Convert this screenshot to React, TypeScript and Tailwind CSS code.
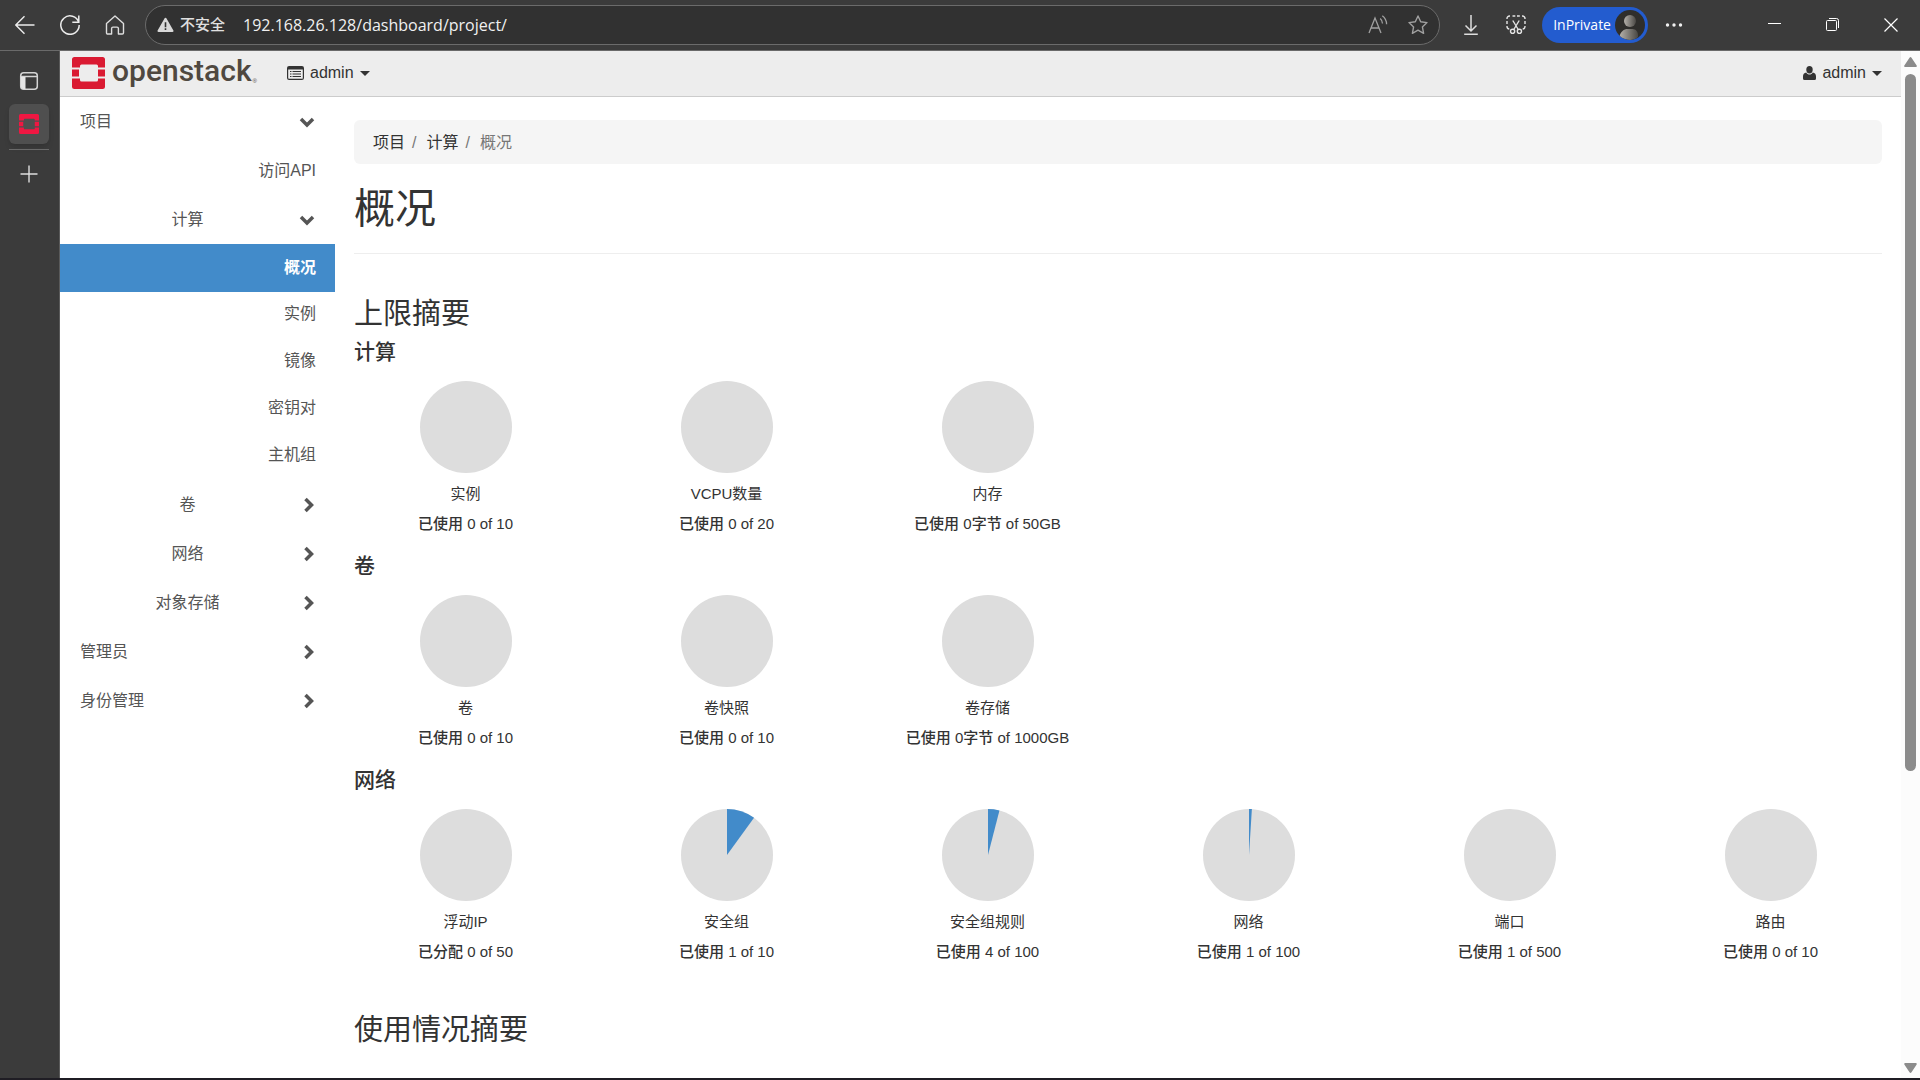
import type { ReactNode } from "react";
import clsx from "clsx";

type NavItem = {
  label: string;
  kind: "panel" | "group" | "link";
  open?: boolean;
  active?: boolean;
};

const navItems: NavItem[] = [
  { label: "项目", kind: "panel", open: true },
  { label: "访问API", kind: "link" },
  { label: "计算", kind: "group", open: true },
  { label: "概况", kind: "link", active: true },
  { label: "实例", kind: "link" },
  { label: "镜像", kind: "link" },
  { label: "密钥对", kind: "link" },
  { label: "主机组", kind: "link" },
  { label: "卷", kind: "group" },
  { label: "网络", kind: "group" },
  { label: "对象存储", kind: "group" },
  { label: "管理员", kind: "panel" },
  { label: "身份管理", kind: "panel" },
];

type Quota = {
  name: string;
  verb?: string;
  used: number;
  unit?: string;
  max: number;
  maxUnit?: string;
  share?: number;
};

const quotaSections: { title: string; quotas: Quota[] }[] = [
  {
    title: "计算",
    quotas: [
      { name: "实例", used: 0, max: 10 },
      { name: "VCPU数量", used: 0, max: 20 },
      { name: "内存", used: 0, unit: "字节", max: 50, maxUnit: "GB" },
    ],
  },
  {
    title: "卷",
    quotas: [
      { name: "卷", used: 0, max: 10 },
      { name: "卷快照", used: 0, max: 10 },
      { name: "卷存储", used: 0, unit: "字节", max: 1000, maxUnit: "GB" },
    ],
  },
  {
    title: "网络",
    quotas: [
      { name: "浮动IP", verb: "已分配", used: 0, max: 50 },
      { name: "安全组", used: 1, max: 10, share: 0.1 },
      { name: "安全组规则", used: 4, max: 100, share: 0.04 },
      { name: "网络", used: 1, max: 100, share: 0.01 },
      { name: "端口", used: 1, max: 500 },
      { name: "路由", used: 0, max: 10 },
    ],
  },
];

function IconButton({ label, className, children }: { label: string; className?: string; children: ReactNode }) {
  return (
    <button type="button" aria-label={label} className={clsx("flex shrink-0 items-center justify-center", className)}>
      {children}
    </button>
  );
}

function OpenStackMark({ className, fill }: { className?: string; fill: string }) {
  return (
    <svg viewBox="0 0 33 32" className={className} fill={fill} preserveAspectRatio="none">
      <path d="M2.5 0h28A2.5 2.5 0 0 1 33 2.5V10.500h-7V9a1.500 1.500 0 0 0-1.500-1.500h-15A1.500 1.500 0 0 0 8 9v1.500H0V2.500A2.500 2.500 0 0 1 2.500 0z" />
      <path d="M0 12.500h7v7H0zM26 12.500h7v7h-7z" />
      <path d="M2.500 32h28a2.500 2.500 0 0 0 2.500-2.500V21.500h-7V23a1.500 1.500 0 0 1-1.500 1.500h-15A1.500 1.500 0 0 1 8 23v-1.500H0v8A2.500 2.500 0 0 0 2.500 32z" />
    </svg>
  );
}

function Caret() {
  return (
    <svg width="10" height="5" viewBox="0 0 10 5" fill="#333">
      <path d="M0 0h10L5 5z" />
    </svg>
  );
}

function Chevron({ open }: { open?: boolean }) {
  return open ? (
    <svg width="16" height="12" viewBox="0 0 16 12" fill="none" stroke="#555" strokeWidth="3.500">
      <path d="M2 3l6 6 6-6" />
    </svg>
  ) : (
    <svg width="12" height="16" viewBox="0 0 12 16" fill="none" stroke="#555" strokeWidth="3.500">
      <path d="M2.500 2l6 6-6 6" />
    </svg>
  );
}

function BrowserBar() {
  return (
    <header className="flex h-[51px] shrink-0 items-center border-b border-[#6a6a6a] bg-[#3b3b3b] pr-[22px] pl-[15px]">
      <div className="flex items-center gap-[25px]">
        <IconButton label="后退">
          <svg width="20" height="20" viewBox="0 0 20 20" fill="none" stroke="#ececec" strokeWidth="1.400">
            <path d="M19.500 10H1M9.500 1.200L.8 10l8.700 8.800" />
          </svg>
        </IconButton>
        <IconButton label="刷新">
          <svg width="20" height="20" viewBox="0 0 20 20" fill="none" stroke="#ececec" strokeWidth="1.500">
            <path d="M18.800 7.400A9.200 9.200 0 1 0 19.200 10M18.800.5v6.700h-6.500" />
          </svg>
        </IconButton>
        <IconButton label="主页">
          <svg width="20" height="20" viewBox="0 0 20 20" fill="none" stroke="#dedede" strokeWidth="1.400" strokeLinejoin="round">
            <path d="M1.500 8.400L10 .9l8.500 7.500v9.400a1.200 1.200 0 0 1-1.200 1.200h-3.900v-5.500a1.400 1.400 0 0 0-1.400-1.400H8a1.400 1.400 0 0 0-1.400 1.400V19H2.700a1.200 1.200 0 0 1-1.200-1.200z" />
          </svg>
        </IconButton>
      </div>

      <div className="ml-5 flex h-10 min-w-0 flex-1 items-center rounded-full border border-[#6b6b6b] bg-[#313131] pr-[11px] pl-[11px]">
        <button type="button" className="flex shrink-0 items-center gap-1.5 text-[15px] leading-5 font-medium text-[#e0e0e0]">
          <svg width="17" height="16" viewBox="0 0 17 16">
            <path d="M8.500.8a1 1 0 0 1 .9.5l7 12.300a1 1 0 0 1-.9 1.500h-14a1 1 0 0 1-.9-1.500l7-12.300a1 1 0 0 1 .9-.5z" fill="#d8d8d8" />
            <path d="M7.700 5.200h1.600v5H7.700zM7.700 11.300h1.600v1.700H7.700z" fill="#313131" />
          </svg>
          不安全
        </button>
        <input
          aria-label="地址"
          defaultValue="192.168.26.128/dashboard/project/"
          className="ml-[18px] min-w-0 flex-1 bg-transparent font-['Open_Sans','Noto_Sans_CJK_SC',sans-serif] text-base text-[#f0f0f0] outline-none"
        />
        <div className="flex items-center gap-5">
          <IconButton label="大声朗读">
            <svg width="20" height="20" viewBox="0 0 20 20" fill="none" stroke="#a0a0a0" strokeWidth="1.300">
              <path d="M1 18L7 3l6 15M3 13h8M12.200 3.500a7 7 0 0 1 2.300 5M14.300.8a11 11 0 0 1 4.300 8.400" />
            </svg>
          </IconButton>
          <IconButton label="收藏">
            <svg width="20" height="20" viewBox="0 0 20 20" fill="none" stroke="#a0a0a0" strokeWidth="1.400" strokeLinejoin="round">
              <path d="M10 1l2.700 5.800 6.300.8-4.600 4.300 1.200 6.400L10 15.200l-5.600 3.100 1.200-6.400L1 7.600l6.300-.8z" />
            </svg>
          </IconButton>
        </div>
      </div>

      <IconButton label="下载" className="ml-[21px]">
        <svg width="20" height="20" viewBox="0 0 20 20" fill="none" stroke="#dedede" strokeWidth="1.500">
          <path d="M10 0v16M4.500 10.500L10 16l5.500-5.500M3.200 19.200h13.600" />
        </svg>
      </IconButton>
      <IconButton label="截图" className="ml-[25px]">
        <svg width="20" height="20" viewBox="0 0 20 20" fill="none" stroke="#e4e4e4" strokeWidth="1.400">
          <path d="M1 4V3.500A2.500 2.500 0 0 1 3.500 1H4M6.500 1h2.800M11 1h2.800M16 1h.5A2.500 2.500 0 0 1 19 3.500V4M1 6v3M19 6v3M1 11v.5A2.500 2.500 0 0 0 3.300 14M19 11v.5a2.500 2.500 0 0 1-2.300 2.500" />
          <path d="M6.800 5.500l5.400 9M13.200 5.500l-5.400 9" />
          <circle cx="6.600" cy="16.300" r="2.100" />
          <circle cx="13.400" cy="16.300" r="2.100" />
        </svg>
      </IconButton>
      <button
        type="button"
        className="ml-4 flex h-9 shrink-0 items-center gap-1 rounded-full bg-[#235ccf] pr-[3px] pl-[11px] font-['Open_Sans',sans-serif] text-sm text-white"
      >
        InPrivate
        <svg width="30" height="30" viewBox="0 0 30 30">
          <defs>
            <linearGradient id="avatar" x1="0" x2="1">
              <stop offset="0" stopColor="#b5b1aa" />
              <stop offset="1" stopColor="#4a4844" />
            </linearGradient>
            <clipPath id="avatarClip">
              <circle cx="15" cy="15" r="15" />
            </clipPath>
          </defs>
          <circle cx="15" cy="15" r="15" fill="#2f2e2b" />
          <g clipPath="url(#avatarClip)" fill="url(#avatar)">
            <circle cx="15" cy="11" r="6" />
            <path d="M4.500 26.500c1-5 4.500-7.500 8-7.500h5c3.500 0 5.500 3 5.500 6v2c-2 2-5 3.200-8 3.200s-8-1-10.500-3.700z" />
          </g>
        </svg>
      </button>
      <IconButton label="设置及其他" className="ml-4">
        <svg width="20" height="20" viewBox="0 0 20 20" fill="#f0f0f0">
          <circle cx="3.500" cy="10" r="1.700" />
          <circle cx="10" cy="10" r="1.700" />
          <circle cx="16.500" cy="10" r="1.700" />
        </svg>
      </IconButton>
      <div className="ml-[84px] flex items-center gap-11">
        <IconButton label="最小化">
          <svg width="14" height="14" viewBox="0 0 14 14" stroke="#fff">
            <path d="M0 5.500h13" />
          </svg>
        </IconButton>
        <IconButton label="还原">
          <svg width="14" height="14" viewBox="0 0 14 14" fill="none" stroke="#fff">
            <rect x=".5" y="2.500" width="10" height="10" rx="1" />
            <path d="M3 .5h7.500a2 2 0 0 1 2 2V10" />
          </svg>
        </IconButton>
        <IconButton label="关闭">
          <svg width="14" height="14" viewBox="0 0 14 14" stroke="#fff" strokeWidth="1.200">
            <path d="M.5.5l13 13M13.500.5l-13 13" />
          </svg>
        </IconButton>
      </div>
    </header>
  );
}

function TabStrip() {
  return (
    <aside className="flex w-[60px] shrink-0 flex-col items-center border-r border-[#5a5a5a] bg-[#3b3b3b] pr-px">
      <IconButton label="标签页操作菜单" className="mt-5">
        <svg width="20" height="20" viewBox="0 0 20 20" fill="none" stroke="#d4d4d4" strokeWidth="1.500">
          <rect x="1.700" y="1.700" width="16.600" height="16.600" rx="3" />
          <path d="M2 5.500h16" />
          <path d="M2 6h4.500v12H4a2 2 0 0 1-2-2z" fill="#e6e6e6" stroke="none" />
        </svg>
      </IconButton>
      <IconButton label="概况 - OpenStack Dashboard" className="mt-[13px] size-10 rounded-md bg-[#4f4f4f] shadow-md">
        <OpenStackMark className="size-5" fill="#f01742" />
      </IconButton>
      <div className="mt-[5px] h-px w-10 bg-[#6a6a6a]" />
      <IconButton label="新建标签页" className="mt-[15px]">
        <svg width="18" height="18" viewBox="0 0 18 18" stroke="#dedede" strokeWidth="1.400">
          <path d="M9 .5v17M.5 9h17" />
        </svg>
      </IconButton>
    </aside>
  );
}

function TopNav() {
  return (
    <div className="flex h-[46px] shrink-0 items-center border-b border-[#ccc] bg-[#ededed] pr-[19px] pb-px pl-3">
      <a href="#" className="flex items-start gap-[7px]">
        <OpenStackMark className="h-8 w-[33px]" fill="#da1a32" />
        <span className="font-[Roboto,sans-serif] text-[30px] leading-7 font-medium text-[#4f4840]">openstack</span>
        <span className="-ml-1.5 self-end text-[6px] leading-4 text-[#4f4840]">®</span>
      </a>
      <button type="button" className="ml-[30px] flex items-center gap-1.5 text-base">
        <svg width="17" height="14" viewBox="0 0 17 14">
          <rect x=".6" y=".6" width="15.800" height="12.800" rx="1.500" fill="none" stroke="#333" strokeWidth="1.200" />
          <path d="M1 1h15v2.500H1z" fill="#333" />
          <path d="M3 5.500h1.500M3 8h1.500M3 10.500h1.500M5.500 5.500H14M5.500 8H14M5.500 10.500H14" stroke="#333" strokeWidth="1.200" />
        </svg>
        admin
        <Caret />
      </button>
      <button type="button" className="ml-auto flex items-center gap-1.5 text-base">
        <svg width="13" height="14" viewBox="0 0 13 14" fill="#333">
          <ellipse cx="6.500" cy="3.700" rx="3.200" ry="3.700" />
          <path d="M3.300 6.500C4 8 5.200 8.600 6.500 8.600S9 8 9.700 6.500c2.300.5 3.300 1.800 3.300 4V12.500a1.500 1.500 0 0 1-1.500 1.500h-10A1.500 1.500 0 0 1 0 12.500v-2c0-2.200 1-3.500 3.300-4z" />
        </svg>
        admin
        <Caret />
      </button>
    </div>
  );
}

function SideNav() {
  return (
    <nav className="w-[275px] shrink-0 text-base leading-6 text-[#555]">
      {navItems.map((item) =>
        item.kind === "link" ? (
          <a
            key={item.label}
            href="#"
            className={clsx(
              "flex items-center justify-end pr-[19px]",
              item.label === "访问API" ? "h-[49px]" : item.active ? "h-12" : "h-[47px] pb-[3px]",
              item.active && "bg-[#428bca] font-bold text-white",
            )}
          >
            {item.label}
          </a>
        ) : (
          <button
            key={item.label}
            type="button"
            aria-expanded={!!item.open}
            className={clsx("flex h-[49px] w-full items-center pr-5 pl-5", item.kind === "panel" && "justify-between")}
          >
            <span className={clsx(item.kind === "group" && "flex-1 pl-1 text-center")}>{item.label}</span>
            <span className={clsx("flex justify-end", item.kind === "group" && "w-6")}>
              <Chevron open={item.open} />
            </span>
          </button>
        ),
      )}
    </nav>
  );
}

function PieChart({ share = 0 }: { share?: number }) {
  const angle = share * 2 * Math.PI;
  const x = 46 + 46 * Math.sin(angle);
  const y = 46 - 46 * Math.cos(angle);
  return (
    <svg width="92" height="92" viewBox="0 0 92 92">
      <circle cx="46" cy="46" r="46" fill="#ddd" />
      {share > 0 && <path d={`M46 46V0A46 46 0 0 1 ${x} ${y}z`} fill="#428bca" />}
    </svg>
  );
}

function QuotaCard({ quota }: { quota: Quota }) {
  return (
    <div className="flex flex-col items-center text-[15px] leading-[21px]">
      <PieChart share={quota.share} />
      <div className="mt-2.5">{quota.name}</div>
      <div className="mt-[9px]">
        <span className="font-medium">{quota.verb ?? "已使用"}</span> {quota.used}
        {quota.unit && <span className="font-medium">{quota.unit}</span>} of {quota.max}
        {quota.maxUnit}
      </div>
    </div>
  );
}

function Overview() {
  return (
    <main className="min-w-0 flex-1 px-[19px] pt-[23px]">
      <nav aria-label="breadcrumb" className="flex h-11 items-center rounded-md bg-[#f5f5f5] px-[19px] pt-px text-base">
        <a href="#">项目</a>
        <span className="px-[7px] text-[#777]">/</span>
        <a href="#" className="ml-[3px]">计算</a>
        <span className="px-[7px] text-[#777]">/</span>
        <span className="ml-[3px] text-[#777]">概况</span>
      </nav>
      <h1 className="mt-[22px] border-b border-[#eee] pb-[21px] text-[41px] leading-[46px]">概况</h1>

      <h2 className="mt-11 mb-2.5 text-[29px] leading-8">上限摘要</h2>
      {quotaSections.map((section) => (
        <section key={section.title} className="mb-5">
          <h3 className="text-[21px] leading-6 font-medium">{section.title}</h3>
          <div className="-mx-[19px] mt-[17px] grid grid-cols-6">
            {section.quotas.map((quota) => (
              <QuotaCard key={quota.name} quota={quota} />
            ))}
          </div>
        </section>
      ))}
      <h2 className="mt-[52px] text-[29px] leading-8">使用情况摘要</h2>
    </main>
  );
}

function ScrollBar() {
  return (
    <div className="flex w-[19px] shrink-0 flex-col items-center bg-[#fcfcfc] pt-1.5 pb-[5px]">
      <svg width="13" height="10" viewBox="0 0 13 10" fill="#8b8b8b">
        <path d="M5.500.8a1.200 1.200 0 0 1 2 0l5 7.500A1 1 0 0 1 11.700 10H1.300a1 1 0 0 1-.8-1.700z" />
      </svg>
      <div className="my-[7px] w-full flex-1 px-1">
        <div className="h-[71%] rounded-full bg-[#8b8b8b]" />
      </div>
      <svg width="13" height="10" viewBox="0 0 13 10" fill="#8b8b8b">
        <path d="M5.500 9.200a1.200 1.200 0 0 0 2 0l5-7.500A1 1 0 0 0 11.700 0H1.300a1 1 0 0 0-.8 1.700z" />
      </svg>
    </div>
  );
}

export default function App() {
  return (
    <div className="flex h-screen flex-col overflow-hidden border-b-2 border-[#1f1d24] bg-white font-['Liberation_Sans','Noto_Sans_CJK_SC',sans-serif] text-[#333]">
      <BrowserBar />
      <div className="flex min-h-0 flex-1">
        <TabStrip />
        <div className="flex min-w-0 flex-1 flex-col overflow-hidden">
          <TopNav />
          <div className="flex min-h-0 flex-1">
            <SideNav />
            <Overview />
          </div>
        </div>
        <ScrollBar />
      </div>
    </div>
  );
}
